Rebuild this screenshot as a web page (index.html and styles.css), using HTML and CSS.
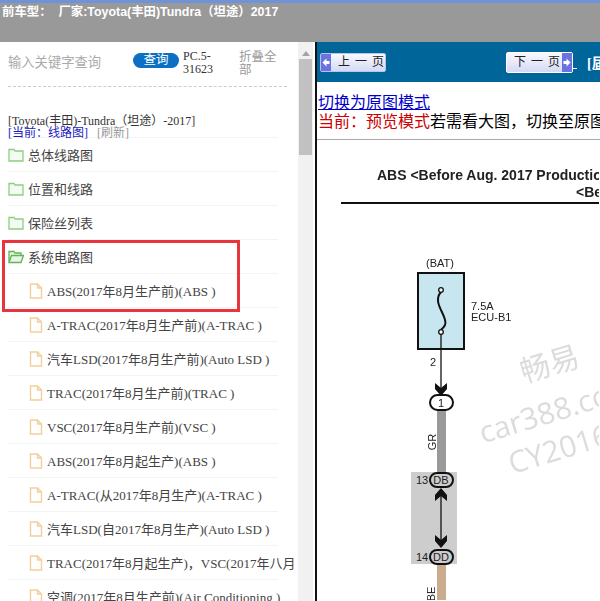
FILE: index.html
```html
<!DOCTYPE html>
<html lang="zh">
  <head>
    <meta charset="UTF-8" />
    <title>线路图</title>
    <link rel="stylesheet" href="styles.css">
  </head>
  <body>
    <header class="topbar">前车型：&nbsp; 厂家:Toyota(丰田)Tundra（坦途）2017</header>
    <main>
      <aside class="side">
        <div class="search">
          <span class="keyword">输入关键字查询</span>
          <button class="query">查询</button>
          <span class="code">PC.5-31623</span>
          <span class="fold">折叠全部</span>
        </div>
        <div class="crumb">
          <div>[Toyota(丰田)-Tundra（坦途）-2017]</div>
          <div><span class="now">[当前：线路图]</span><span class="refresh">[刷新]</span></div>
        </div>
        <ul class="tree">
          <li><svg class="ico" viewBox="0 0 16 14"><path d="M1 3V1.500h5l1 1.500h8v10H1z" fill="#f4fbf2" stroke="#8ccf80" stroke-width="1.300"/></svg>总体线路图</li>
          <li><svg class="ico" viewBox="0 0 16 14"><path d="M1 3V1.500h5l1 1.500h8v10H1z" fill="#f4fbf2" stroke="#8ccf80" stroke-width="1.300"/></svg>位置和线路</li>
          <li><svg class="ico" viewBox="0 0 16 14"><path d="M1 3V1.500h5l1 1.500h8v10H1z" fill="#f4fbf2" stroke="#8ccf80" stroke-width="1.300"/></svg>保险丝列表</li>
          <li><svg class="ico" viewBox="0 0 16 14"><path d="M1 12.500V1.500h5l1 1.500h6v2.500M1 12.500l2.500-7H15.500l-2.500 7z" fill="#e6f6e1" stroke="#5fb455" stroke-width="1.300"/></svg>系统电路图</li>
          <li class="leaf"><svg class="doc" viewBox="0 0 14 16"><path d="M1.500 1h7l4 4v10h-11zM8.500 1v4h4" fill="#fff" stroke="#f2cf9c" stroke-width="1.400"/></svg>ABS(2017年8月生产前)(ABS )</li>
          <li class="leaf"><svg class="doc" viewBox="0 0 14 16"><path d="M1.500 1h7l4 4v10h-11zM8.500 1v4h4" fill="#fff" stroke="#f2cf9c" stroke-width="1.400"/></svg>A-TRAC(2017年8月生产前)(A-TRAC )</li>
          <li class="leaf"><svg class="doc" viewBox="0 0 14 16"><path d="M1.500 1h7l4 4v10h-11zM8.500 1v4h4" fill="#fff" stroke="#f2cf9c" stroke-width="1.400"/></svg>汽车LSD(2017年8月生产前)(Auto LSD )</li>
          <li class="leaf"><svg class="doc" viewBox="0 0 14 16"><path d="M1.500 1h7l4 4v10h-11zM8.500 1v4h4" fill="#fff" stroke="#f2cf9c" stroke-width="1.400"/></svg>TRAC(2017年8月生产前)(TRAC )</li>
          <li class="leaf"><svg class="doc" viewBox="0 0 14 16"><path d="M1.500 1h7l4 4v10h-11zM8.500 1v4h4" fill="#fff" stroke="#f2cf9c" stroke-width="1.400"/></svg>VSC(2017年8月生产前)(VSC )</li>
          <li class="leaf"><svg class="doc" viewBox="0 0 14 16"><path d="M1.500 1h7l4 4v10h-11zM8.500 1v4h4" fill="#fff" stroke="#f2cf9c" stroke-width="1.400"/></svg>ABS(2017年8月起生产)(ABS )</li>
          <li class="leaf"><svg class="doc" viewBox="0 0 14 16"><path d="M1.500 1h7l4 4v10h-11zM8.500 1v4h4" fill="#fff" stroke="#f2cf9c" stroke-width="1.400"/></svg>A-TRAC(从2017年8月生产)(A-TRAC )</li>
          <li class="leaf"><svg class="doc" viewBox="0 0 14 16"><path d="M1.500 1h7l4 4v10h-11zM8.500 1v4h4" fill="#fff" stroke="#f2cf9c" stroke-width="1.400"/></svg>汽车LSD(自2017年8月生产)(Auto LSD )</li>
          <li class="leaf"><svg class="doc" viewBox="0 0 14 16"><path d="M1.500 1h7l4 4v10h-11zM8.500 1v4h4" fill="#fff" stroke="#f2cf9c" stroke-width="1.400"/></svg>TRAC(2017年8月起生产)，VSC(2017年八月</li>
          <li class="leaf"><svg class="doc" viewBox="0 0 14 16"><path d="M1.500 1h7l4 4v10h-11zM8.500 1v4h4" fill="#fff" stroke="#f2cf9c" stroke-width="1.400"/></svg>空调(2017年8月生产前)(Air Conditioning )</li>
        </ul>
        <div class="mark"></div>
      </aside>
      <div class="scrollbar">
        <svg class="arrow" viewBox="0 0 8 5"><path d="M0 5 4 0l4 5z" fill="#a3a3a3"/></svg>
        <div class="thumb"></div>
      </div>
      <section class="view">
        <nav class="pager">
          <span class="btn prev"><svg class="tip" viewBox="0 0 10 17"><path d="M1.500 8.500 5.500 4.500v2.500h3v3h-3v2.500z" fill="#fff"/></svg><span class="btn-text">上一页</span></span>
          <span class="btn next"><span class="btn-text">下一页</span><svg class="tip" viewBox="0 0 10 19"><path d="M8.500 9.500 4.500 5.500v2.500h-3v3h3v2.500z" fill="#fff"/></svg></span>
          <span class="under"></span>
          <a class="back">[届</a>
        </nav>
        <div class="mode">
          <a class="switch">切换为原图模式</a><br>
          <span class="red">当前：预览模式</span>若需看大图，切换至原图模式
        </div>
        <svg class="sheet" viewBox="318 141 282 460" width="282" height="460">
          <text x="378" y="181" class="title">ABS &lt;Before Aug. 2017 Production&gt;</text>
          <text x="577" y="198" class="title">&lt;Before</text>
          <rect x="342" y="203" width="258" height="2" fill="#111"/>

          <text x="441" y="268" class="label" text-anchor="middle">(BAT)</text>
          <rect x="419" y="274" width="46" height="76" fill="#c7e6ef" stroke="#111" stroke-width="2"/>
          <path d="M442 293C432 304 450 318 446 326 444 330 442 330 442 331" fill="none" stroke="#111" stroke-width="2"/>
          <circle cx="442" cy="291" r="2.300" fill="#fff" stroke="#111" stroke-width="1.300"/>
          <circle cx="442" cy="333" r="2.300" fill="#fff" stroke="#111" stroke-width="1.300"/>
          <text x="472" y="311" class="label">7.5A</text>
          <text x="472" y="322" class="label">ECU-B1</text>
          <text x="434" y="367" class="label" text-anchor="middle">2</text>
          <path d="M442 335V392" stroke="#111" stroke-width="1.300"/>
          <path d="M436 384l6 5 6-5v6l-6 7-6-7z" fill="#111"/>
          <rect x="438" y="412" width="9" height="62" fill="#999"/>
          <rect x="431" y="396" width="23" height="15" rx="7.500" fill="#fff" stroke="#111" stroke-width="2"/>
          <text x="442" y="408" class="label" text-anchor="middle">1</text>
          <text class="label" text-anchor="middle" transform="translate(437 443) rotate(-90)">GR</text>

          <rect x="412" y="473" width="46" height="92" fill="#cdcdcd"/>
          <rect x="438" y="565" width="9" height="36" fill="#c9ab8e"/>
          <path d="M442 494V544" stroke="#111" stroke-width="1.300"/>
          <path d="M436 502l6-5 6 5v-6l-6-7-6 7z" fill="#111"/>
          <path d="M436 536l6 5 6-5v6l-6 7-6-7z" fill="#111"/>
          <rect x="431" y="474" width="23" height="14" rx="7" fill="#cdcdcd" stroke="#111" stroke-width="2"/>
          <text x="442" y="485" class="label" text-anchor="middle">DB</text>
          <rect x="431" y="551" width="23" height="14" rx="7" fill="#cdcdcd" stroke="#111" stroke-width="2"/>
          <text x="442" y="562" class="label" text-anchor="middle">DD</text>
          <text x="423" y="485" class="label" text-anchor="middle">13</text>
          <text x="423" y="562" class="label" text-anchor="middle">14</text>
          <text class="label" text-anchor="middle" transform="translate(436 595) rotate(-90)">BE</text>

          <g class="stamp" transform="rotate(-17 550 370)">
            <text x="522" y="376" class="stamp-cn">畅易</text>
            <text x="465" y="422" class="stamp-en">car388.com</text>
            <text x="484" y="460" class="stamp-en">CY2016</text>
          </g>
        </svg>
      </section>
    </main>
  </body>
</html>
```

FILE: styles.css
```css
* {
  box-sizing: border-box;
  margin: 0;
  padding: 0;
}

html,
body {
  height: 601px;
  overflow: hidden;
}

body {
  display: flex;
  flex-direction: column;
  background: #fff;
  font-family: "Liberation Serif", "Noto Sans CJK SC", serif;
}

.topbar {
  flex: 0 0 42px;
  padding-top: 2px;
  border-top: 3px solid #6f93d8;
  background: #999;
  color: #fff;
  font-family: "Liberation Sans", "Noto Sans CJK SC", sans-serif;
  font-size: 12.400px;
  font-weight: bold;
  line-height: 14px;
  white-space: nowrap;
  text-indent: 2px;
}

main {
  flex: 1;
  display: flex;
  min-height: 0;
}

.side {
  position: relative;
  flex: 0 0 298px;
  overflow: hidden;
}

.search {
  display: flex;
  align-items: flex-start;
  height: 45px;
  margin: 0 11px 0 8px;
  padding-top: 11px;
  border-bottom: 1px dashed #ccc;
  font-size: 12px;
  line-height: 13px;
}

.keyword {
  width: 125px;
  padding-top: 3px;
  color: #aaa;
  font-size: 13.300px;
}

.query {
  width: 46px;
  height: 15px;
  border: 0;
  border-radius: 8px;
  background: #0b6fc4;
  color: #fff;
  font: 12.500px/15px "Liberation Sans", "Noto Sans CJK SC", sans-serif;
}

.code {
  width: 40px;
  margin-top: -3px;
  margin-left: 4px;
  color: #333;
}

.fold {
  width: 38px;
  margin-top: -2px;
  margin-left: 16px;
  color: #999;
  font-size: 12.500px;
}

.crumb {
  height: 51px;
  padding: 28px 0 0 8px;
  color: #333;
  font-size: 12px;
  line-height: 12px;
}

.now {
  color: #1a1ac0;
}

.refresh {
  margin-left: 9px;
  color: #999;
}

.tree {
  list-style: none;
  margin: -1px 20px 0 8px;
}

.tree li {
  display: flex;
  align-items: center;
  height: 34px;
  border-top: 1px solid #f3f3f3;
  color: #444;
  font-size: 13px;
  white-space: nowrap;
}

.ico {
  flex: none;
  width: 16px;
  height: 14px;
  margin-right: 4px;
}

.doc {
  flex: none;
  width: 14px;
  height: 16px;
  margin-right: 4px;
}

.leaf {
  padding-left: 21px;
}

.mark {
  position: absolute;
  left: 2px;
  top: 198px;
  width: 238px;
  height: 72px;
  border: 3px solid #e8343c;
}

.scrollbar {
  flex: 0 0 15px;
  padding-top: 9px;
  background: #f1f1f1;
}

.arrow {
  width: 8px;
  height: 5px;
  display: block;
  margin: 0 auto 3px;
}

.thumb {
  height: 96px;
  margin: 0 1px;
  background: #c1c1c1;
}

.view {
  flex: 1;
  min-width: 0;
  margin-left: 2px;
  border-left: 2px solid #111;
  overflow: hidden;
}

.pager {
  display: flex;
  align-items: center;
  height: 40px;
  padding-left: 3px;
  background: #006699;
}

.pager > * {
  flex: none;
}

.btn {
  display: flex;
  align-items: stretch;
  height: 19px;
  width: 66px;
  border: 1px solid #b8c4ee;
  border-radius: 2px;
  background: linear-gradient(#f8f9ff, #d5daf5);
  color: #222;
  font-size: 12px;
  line-height: 17px;
}

.btn-text {
  flex: 1;
  min-width: 0;
  padding-left: 7px;
  letter-spacing: 5px;
  white-space: nowrap;
}

.tip {
  flex: none;
  width: 10px;
  height: 100%;
  background: #6a73e0;
}

.next {
  height: 21px;
  width: 67px;
  margin-left: 120px;
  border-color: #fff;
  line-height: 19px;
}

.under {
  width: 4px;
  height: 14px;
  border-bottom: 1px solid #fff;
}

.back {
  margin-left: 10px;
  color: #fff;
  font-size: 14px;
  font-weight: bold;
  text-decoration: underline;
  white-space: nowrap;
}

.mode {
  height: 58px;
  padding: 11px 0 0 1px;
  border-bottom: 1px solid #aaa;
  font-size: 16px;
  line-height: 19px;
  white-space: nowrap;
}

.switch {
  color: #0000cc;
  text-decoration: underline;
}

.red {
  color: #cc0000;
}

.sheet {
  display: block;
  filter: blur(0.3px);
}

.title {
  font: bold 14px "Liberation Sans", sans-serif;
  fill: #222;
}

.label {
  font: 11px "Liberation Sans", sans-serif;
  fill: #222;
}

.stamp text {
  fill: #dcdcdc;
}

.stamp-cn {
  font: 30px "Noto Sans CJK SC", sans-serif;
}

.stamp-en {
  font: 30px "Open Sans", sans-serif;
}
```
